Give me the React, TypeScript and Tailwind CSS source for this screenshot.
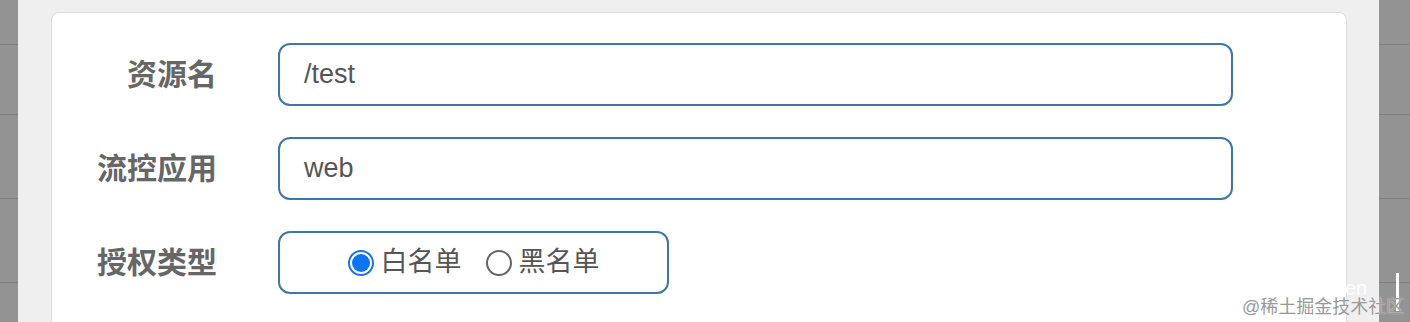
import React from 'react'

const rowHeights = [44, 70, 84, 84, 60]

const Strip: React.FC<{ width: string }> = ({ width }) => (
  <div className={`flex flex-col shrink-0 bg-[#939393] ${width}`}>
    {rowHeights.map((h, i) => (
      <div
        key={i}
        className={i === 0 ? 'shrink-0' : 'shrink-0 border-t border-[#7f7f7f]'}
        style={{ height: h }}
      />
    ))}
  </div>
)

const labelCls =
  'w-[165px] shrink-0 text-right text-[30px] font-bold text-[#666] leading-none'
const boxCls =
  'h-[63px] rounded-[12px] border-2 border-[#3c77a7] bg-white flex items-center'

const Field: React.FC<{ label: string; value: string }> = ({ label, value }) => (
  <div className="flex items-center">
    <div className={labelCls}>{label}</div>
    <div className={`${boxCls} ml-[61px] w-[955px] px-[24px] text-[27px] text-[#555]`}>
      {value}
    </div>
  </div>
)

const Radio: React.FC<{ checked?: boolean; label: string }> = ({ checked, label }) => (
  <label className="flex items-center">
    <span
      className={
        checked
          ? 'w-[26px] h-[26px] rounded-full border-[2px] border-[#1a73e8] flex items-center justify-center'
          : 'w-[26px] h-[26px] rounded-full border-[2px] border-[#666]'
      }
    >
      {checked && <span className="w-[18px] h-[18px] rounded-full bg-[#0b74f5]" />}
    </span>
    <span className="ml-[7px] text-[27px] text-[#555]">{label}</span>
  </label>
)

export default function App() {
  return (
    <div
      className="relative flex w-[1410px] h-[322px] overflow-hidden bg-[#efefef]"
      style={{ fontFamily: '"Liberation Sans", "Noto Sans CJK SC", sans-serif' }}
    >
      <Strip width="w-[18px]" />
      <div className="flex-1 pt-[12px] pl-[33px] pr-[32px]">
        <div className="h-full rounded-t-[8px] border border-[#dcdcdc] border-b-0 bg-white pt-[30px]">
          <div className="flex flex-col gap-[31px]">
            <Field label="资源名" value="/test" />
            <Field label="流控应用" value="web" />
            <div className="flex items-center">
              <div className={labelCls}>授权类型</div>
              <div className={`${boxCls} ml-[61px] w-[391px] justify-center gap-[24px]`}>
                <Radio checked label="白名单" />
                <Radio label="黑名单" />
              </div>
            </div>
          </div>
        </div>
      </div>
      <Strip width="w-[31px]" />

      <div className="absolute left-[1345px] top-[280px] text-[20px] text-white/90 leading-[16px]">en</div>
      <div className="absolute left-[1396px] top-[273px] w-[3px] h-[38px] bg-white" />
      <div className="absolute left-[1242px] top-[298px] text-[18px] text-[#999] leading-none [text-shadow:0_0_1px_#fff]">
        @稀土掘金技术社区
      </div>
    </div>
  )
}
